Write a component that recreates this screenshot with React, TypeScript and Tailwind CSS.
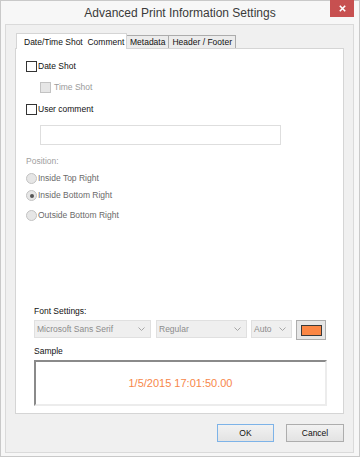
const ui = "font-['Liberation_Sans',Arial,sans-serif]"

function Check({ label, disabled }: { label: string; disabled?: boolean }) {
  return (
    <div className="flex h-[11px] items-center gap-[1px]">
      <span
        className={
          disabled
            ? 'box-border h-[11px] w-[11px] border border-[#c3c3c3] bg-[#e6e6e6]'
            : 'box-border h-[11px] w-[11px] border border-[#333333] bg-white'
        }
      />
      <span className={disabled ? 'ml-[2px] text-[#9a9a9a]' : 'text-[#111111]'}>{label}</span>
    </div>
  )
}

function Radio({ label, checked }: { label: string; checked?: boolean }) {
  return (
    <div className="flex h-[11px] items-center gap-[1px]">
      <span className="box-border flex h-[11px] w-[11px] items-center justify-center rounded-full border border-[#c3c3c3] bg-[#e6e6e6]">
        {checked && <span className="h-[4px] w-[4px] rounded-full bg-[#555555]" />}
      </span>
      <span className="text-[#6a6a6a]">{label}</span>
    </div>
  )
}

function Chevron() {
  return (
    <svg width="7" height="4" viewBox="0 0 7 4" className="shrink-0">
      <polyline points="0.5,0.5 3.5,3.5 6.5,0.5" fill="none" stroke="#a6a6a6" strokeWidth="1" />
    </svg>
  )
}

function Combo({ value, width }: { value: string; width: string }) {
  return (
    <div
      className={`${width} box-border flex h-[18px] items-center justify-between border border-[#e0e0e0] bg-[#efefef] pl-[2px] pr-[5px] text-[#8c8c8c]`}
    >
      <span>{value}</span>
      <Chevron />
    </div>
  )
}

export default function App() {
  const tabs = ['Metadata', 'Header / Footer']

  return (
    <div className={`${ui} box-border flex h-[457px] w-[360px] flex-col border border-[#c9c9c9] bg-[#f7f7f7] text-[8.5px] leading-[11px]`}>
      <div className="grid h-[23px] grid-cols-[1fr_auto_1fr] items-start">
        <div />
        <div className="pt-[5px] text-[12px] leading-[14px] text-[#3a3a3a]">
          Advanced Print Information Settings
        </div>
        <div className="flex justify-end pr-[5px]">
          <button className="-mt-px flex h-[17px] w-[24px] items-center justify-center bg-[#c75050]">
            <svg width="7" height="7" viewBox="0 0 7 7">
              <path d="M0.8 0.8 L6.2 6.2 M6.2 0.8 L0.8 6.2" stroke="white" strokeWidth="1.6" />
            </svg>
          </button>
        </div>
      </div>

      <div className="ml-[4px] box-border flex h-[429px] w-[349px] flex-col border border-[#dadada] bg-[#f0f0f0]">
        <div className="flex items-end pl-[10px] pt-[8px]">
          <div className="relative z-10 -mb-px box-border h-[16px] w-[111px] border border-b-0 border-[#d5d5d5] bg-white pl-[7px] pt-[3px] whitespace-pre text-[#111111]">
            {'Date/Time Shot  Comment'}
          </div>
          {tabs.map((t) => (
            <div
              key={t}
              className="-ml-px box-border h-[13px] border border-b-0 border-[#acacac] bg-[#ececec] px-[3px] pt-px text-[#111111]"
            >
              {t}
            </div>
          ))}
        </div>

        <div className="ml-[9px] box-border flex h-[366px] w-[329px] flex-col border border-[#d5d5d5] bg-white pl-[10px]">
          <div className="mt-[12px]">
            <Check label="Date Shot" />
          </div>
          <div className="ml-[14px] mt-[10px]">
            <Check label="Time Shot" disabled />
          </div>
          <div className="mt-[11px]">
            <Check label="User comment" />
          </div>
          <div className="ml-[14px] mt-[10px] box-border h-[20px] w-[241px] border border-[#dedede] bg-white" />

          <div className="mt-[11px] h-[11px] text-[#a0a0a0]">Position:</div>
          <div className="mt-[6px]">
            <Radio label="Inside Top Right" />
          </div>
          <div className="mt-[6px]">
            <Radio label="Inside Bottom Right" checked />
          </div>
          <div className="mt-[9px]">
            <Radio label="Outside Bottom Right" />
          </div>

          <div className="ml-[8px] mt-[85px] flex flex-col">
            <div className="h-[11px] text-[#111111]">Font Settings:</div>
            <div className="mt-[3px] flex items-start">
              <Combo value="Microsoft Sans Serif" width="w-[117px]" />
              <div className="ml-[5px]">
                <Combo value="Regular" width="w-[91px]" />
              </div>
              <div className="ml-[4px]">
                <Combo value="Auto" width="w-[41px]" />
              </div>
              <div className="ml-[4px] box-border flex h-[20px] w-[30px] items-center justify-center border border-[#adadad] bg-[#e6e6e6]">
                <span className="box-border h-[11px] w-[21px] border border-[#3a3a3a] bg-[#fb8644]" />
              </div>
            </div>
            <div className="mt-[6px] h-[11px] text-[#111111]">Sample</div>
            <div className="mt-[3px] box-border flex h-[46px] w-[293px] items-center justify-center border-2 border-b-[#ececec] border-l-[#8a8a8a] border-r-[#ececec] border-t-[#8a8a8a] bg-white text-[11px] text-[#f7874a]">
              1/5/2015 17:01:50.00
            </div>
          </div>
        </div>

        <div className="mt-[10px] flex justify-end gap-[12px] pr-[9px]">
          <button className="box-border h-[18px] w-[57px] border border-[#7db3e8] bg-gradient-to-b from-[#f2f2f2] to-[#e3e3e3] text-[#111111]">
            OK
          </button>
          <button className="box-border h-[18px] w-[58px] border border-[#adadad] bg-gradient-to-b from-[#f2f2f2] to-[#e3e3e3] text-[#111111]">
            Cancel
          </button>
        </div>
      </div>
    </div>
  )
}
